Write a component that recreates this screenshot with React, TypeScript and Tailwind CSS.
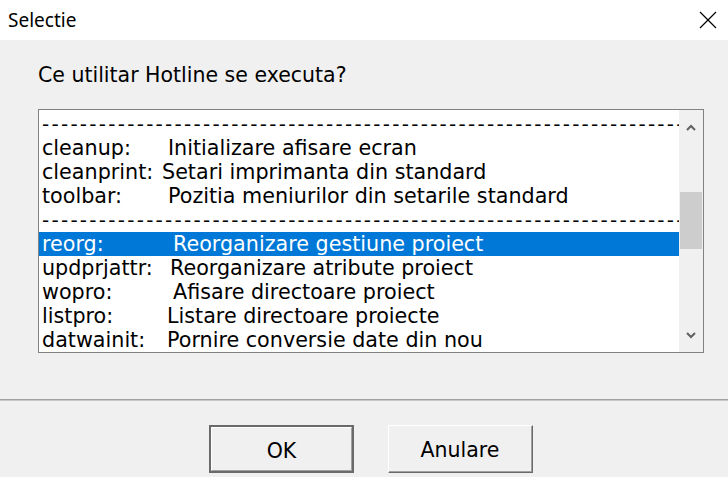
import React from "react";

type Row =
  | { kind: "sep" }
  | { kind: "item"; name: string; desc: string; w: string; sel?: boolean };

const rows: Row[] = [
  { kind: "sep" },
  { kind: "item", name: "cleanup:", desc: "Initializare afisare ecran", w: "w-[126px]" },
  { kind: "item", name: "cleanprint:", desc: "Setari imprimanta din standard", w: "w-[120px]" },
  { kind: "item", name: "toolbar:", desc: "Pozitia meniurilor din setarile standard", w: "w-[126px]" },
  { kind: "sep" },
  { kind: "item", name: "reorg:", desc: "Reorganizare gestiune proiect", w: "w-[131px]", sel: true },
  { kind: "item", name: "updprjattr:", desc: "Reorganizare atribute proiect", w: "w-[128px]" },
  { kind: "item", name: "wopro:", desc: "Afisare directoare proiect", w: "w-[131px]" },
  { kind: "item", name: "listpro:", desc: "Listare directoare proiecte", w: "w-[125px]" },
  { kind: "item", name: "datwainit:", desc: "Pornire conversie date din nou", w: "w-[125px]" },
];

const dashes = "-".repeat(70);

export default function App() {
  return (
    <div className="w-[728px] h-[477px] bg-[#f0f0f0] overflow-hidden flex flex-col">
      {/* Title bar */}
      <div className="h-[40px] bg-white flex items-center justify-between pl-[8px] pr-[11px] shrink-0">
        <span className="text-[19px] text-black" style={{ fontFamily: '"Noto Sans", sans-serif' }}>
          Selectie
        </span>
        <svg width="18" height="18" viewBox="0 0 18 18" className="text-black">
          <path d="M1 1 L17 17 M17 1 L1 17" stroke="currentColor" strokeWidth="1.2" fill="none" />
        </svg>
      </div>

      {/* Body */}
      <div className="flex flex-col" style={{ fontFamily: '"DejaVu Sans", Verdana, sans-serif' }}>
        <div className="pl-[38px] mt-[24px] h-[22px] leading-[22px] text-[20.5px] text-black">
          Ce utilitar Hotline se executa?
        </div>

        {/* Listbox */}
        <div className="ml-[38px] mt-[23px] w-[666px] h-[244px] border border-[#828282] bg-white flex">
          <div className="w-[640px] pt-[2px] overflow-hidden">
            {rows.map((r, i) =>
              r.kind === "sep" ? (
                <div
                  key={i}
                  className="h-[24px] leading-[24px] pl-[3px] text-[20px] tracking-[2.25px] text-black whitespace-nowrap"
                >
                  {dashes}
                </div>
              ) : (
                <div
                  key={i}
                  className={
                    r.sel
                      ? "h-[24px] leading-[24px] pl-[3px] text-[20.7px] whitespace-nowrap flex bg-[#0078d7] text-white"
                      : "h-[24px] leading-[24px] pl-[3px] text-[20.7px] whitespace-nowrap flex text-black"
                  }
                >
                  <span className={`${r.w} shrink-0`}>{r.name}</span>
                  <span>{r.desc}</span>
                </div>
              )
            )}
          </div>
          {/* Scrollbar */}
          <div className="w-[24px] bg-[#f0f0f0] flex flex-col">
            <div className="h-[34px] flex items-center justify-center">
              <svg width="10" height="7" viewBox="0 0 10 7">
                <path d="M1 6 L5 2 L9 6" stroke="#606060" strokeWidth="2" fill="none" />
              </svg>
            </div>
            <div className="flex-1 px-[1px] pt-[48px]">
              <div className="h-[57px] bg-[#cdcdcd]" />
            </div>
            <div className="h-[34px] flex items-center justify-center">
              <svg width="10" height="7" viewBox="0 0 10 7">
                <path d="M1 1 L5 5 L9 1" stroke="#606060" strokeWidth="2" fill="none" />
              </svg>
            </div>
          </div>
        </div>

        {/* Separator */}
        <div className="mt-[46px] h-[1px] bg-[#a0a0a0]" />
        <div className="h-[1px] bg-[#c8c8c8]" />

        {/* Buttons */}
        <div className="mt-[24px] flex pl-[209px] gap-[34px]">
          <button className="w-[145px] h-[48px] border-2 border-[#6a6a6a] bg-[#f0f0f0] text-[20.5px] text-black flex items-center justify-center">
            <span className="w-full h-full pt-[4px] border-t border-l border-white border-b border-r border-b-[#a0a0a0] border-r-[#a0a0a0] flex items-center justify-center">
              OK
            </span>
          </button>
          <button className="w-[145px] h-[48px] border border-t-white border-l-white border-b-[#696969] border-r-[#696969] bg-[#f0f0f0] text-[20.5px] text-black flex items-center justify-center">
            <span className="w-full h-full pt-[4px] border-b border-r border-b-[#a0a0a0] border-r-[#a0a0a0] border-t-transparent border-l-transparent flex items-center justify-center">
              Anulare
            </span>
          </button>
        </div>
      </div>
    </div>
  );
}
